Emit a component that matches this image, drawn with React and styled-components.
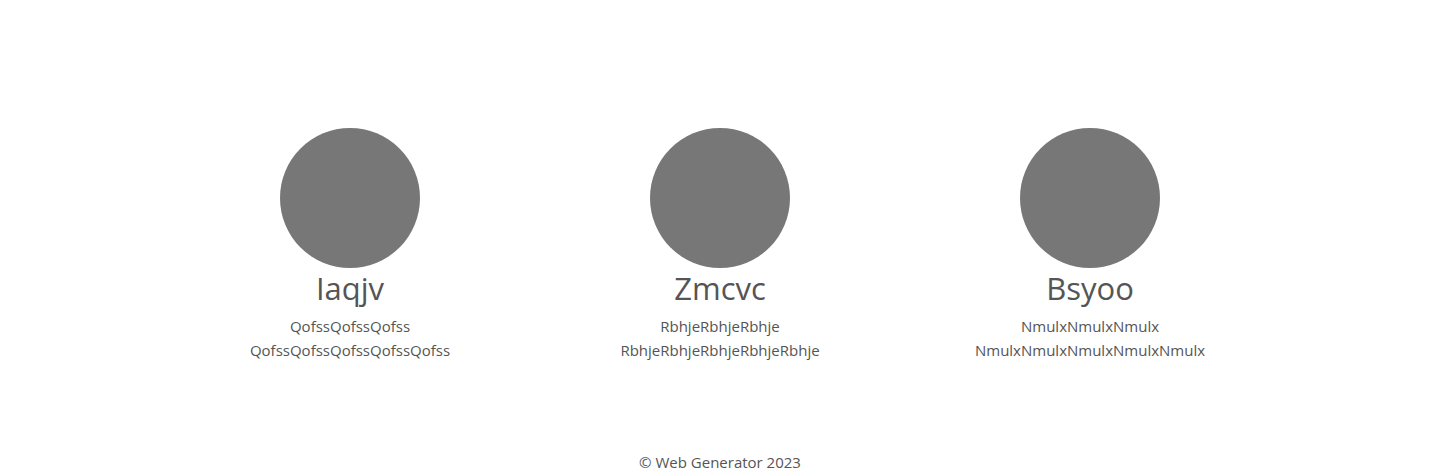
import React from 'react';
import styled, { createGlobalStyle } from 'styled-components';

const GlobalStyle = createGlobalStyle`
   html, body {
      margin: 0;
      padding: 0;
      background: #fff;
   }
   body {
      font-family: 'Open Sans', 'Noto Sans', sans-serif;
      color: #555;
   }
`;

const Page = styled.div`
   display: flex;
   flex-direction: column;
   min-height: 474px;
`;

const Team = styled.section`
   width: 1110px;
   margin: 0 auto;
   padding-top: 128px;
   display: grid;
   grid-template-columns: repeat(3, 1fr);
`;

const Member = styled.div`
   display: flex;
   flex-direction: column;
   align-items: center;
   text-align: center;
`;

const Avatar = styled.div`
   width: 140px;
   height: 140px;
   border-radius: 50%;
   background: #777;
`;

const Name = styled.h3`
   margin: 2px 0 0;
   font-size: 31px;
   font-weight: 400;
   line-height: 36px;
   color: #555;
`;

const Bio = styled.p`
   margin: 8px 0 0;
   font-size: 15px;
   line-height: 24px;
   color: #555;
`;

const Footer = styled.footer`
   margin-top: auto;
   text-align: center;
   font-size: 15px;
   line-height: 24px;
   color: #555;
`;

const members = [
   { name: 'Iaqjv', word: 'Qofss' },
   { name: 'Zmcvc', word: 'Rbhje' },
   { name: 'Bsyoo', word: 'Nmulx' },
];

export default function App() {
   return (
      <Page>
         <GlobalStyle />
         <Team>
            {members.map((m) => (
               <Member key={m.name}>
                  <Avatar />
                  <Name>{m.name}</Name>
                  <Bio>
                     {m.word.repeat(3)}
                     <br />
                     {m.word.repeat(5)}
                  </Bio>
               </Member>
            ))}
         </Team>
         <Footer>© Web Generator 2023</Footer>
      </Page>
   );
}
